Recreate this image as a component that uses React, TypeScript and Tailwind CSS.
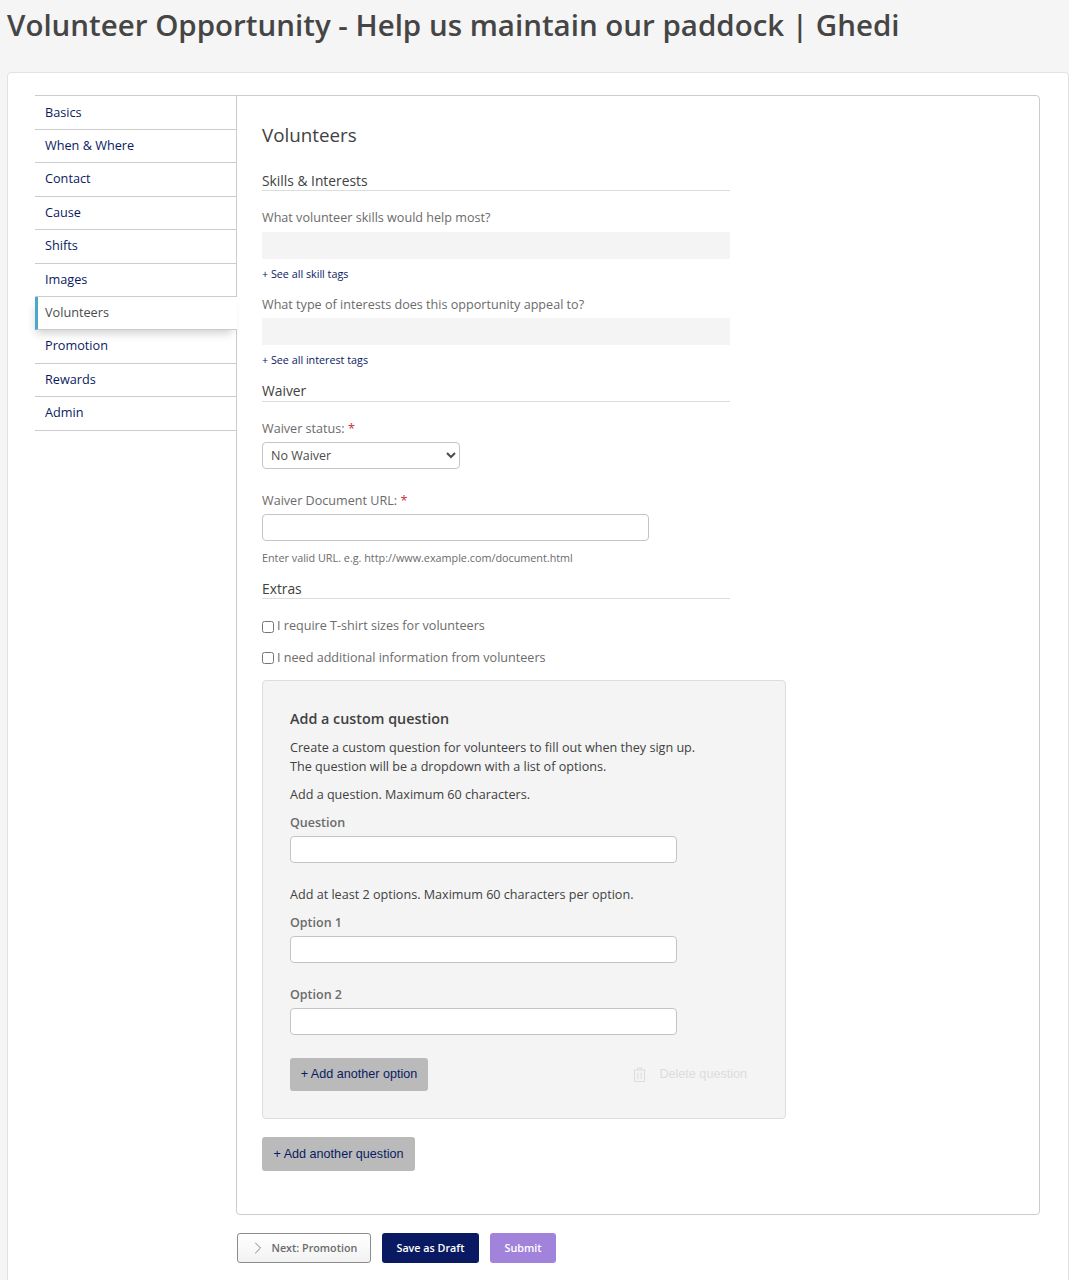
import { ChevronRight } from "lucide-react";

const navItems = ["Basics", "When & Where", "Contact", "Cause", "Shifts", "Images", "Volunteers", "Promotion", "Rewards", "Admin"];

const SectionHeading = ({ children, className }: { children: string; className: string }) => (
  <h3 className={`w-[468px] border-b border-[#dddddd] text-[13.8px] leading-[20px] text-[#414141] ${className}`}>{children}</h3>
);

const TextBox = ({ className }: { className: string }) => (
  <input type="text" className={`block w-[387px] h-[27px] bg-white border border-[#c4c4c4] rounded-[4px] ${className}`} />
);

const Required = () => <span className="text-[#c8303a]"> *</span>;

const App = () => {
  return (
    <div className="h-[1280px] overflow-hidden bg-[#f5f5f5] font-['Open_Sans',sans-serif]">
      <h1 className="pl-[7px] pt-[4px] h-[72px] text-[29.5px] leading-[42px] font-semibold text-[#454545] whitespace-nowrap">
        Volunteer Opportunity - Help us maintain our paddock | Ghedi
      </h1>
      <div className="ml-[7px] h-[1300px] bg-white border border-[#e2e2e2] rounded-tl-[4px] rounded-tr-[4px] pl-[27px] pt-[22px] pr-[28px]">
        <div className="flex items-start">
          <ul className="w-[202px] shrink-0 border-t border-[#cccccc] pt-[0.7px] mr-[-1px]">
            {navItems.map((item) =>
              item === "Volunteers" ? (
                <li key={item} className="relative z-10 h-[33.4px] bg-white border-b border-[#cccccc] border-l-[3px] border-l-[#4ba8c9] pl-[7px] text-[12.7px] leading-[31.2px] text-[#4c4c4c] shadow-[-2px_6px_10px_-3px_rgba(0,0,0,0.2)]">
                  {item}
                </li>
              ) : (
                <li key={item} className="h-[33.4px] border-b border-[#cccccc] pl-[10px] text-[12.7px] leading-[31.2px] text-[#0a1a62]">
                  {item}
                </li>
              )
            )}
          </ul>
          <div className="flex-1">
            <div className="h-[1120px] border border-[#cccccc] rounded-br-[4px] rounded-tr-[4px] rounded-bl-[4px] pl-[25px]">
              <h2 className="pt-[26px] text-[18.8px] leading-[26px] text-[#414141]">Volunteers</h2>
              <SectionHeading className="mt-[23px] h-[20px]">Skills & Interests</SectionHeading>
              <p className="mt-[17px] text-[12.6px] leading-[20px] text-[#6b6b6b]">What volunteer skills would help most?</p>
              <div className="mt-[4px] w-[468px] h-[27px] bg-[#f4f4f4]" />
              <a className="block mt-[7px] text-[10.75px] leading-[16px] text-[#0a1a62]">+ See all skill tags</a>
              <p className="mt-[13px] text-[12.6px] leading-[20px] text-[#6b6b6b]">What type of interests does this opportunity appeal to?</p>
              <div className="mt-[3px] w-[468px] h-[27px] bg-[#f4f4f4]" />
              <a className="block mt-[7px] text-[10.75px] leading-[16px] text-[#0a1a62]">+ See all interest tags</a>
              <SectionHeading className="mt-[13px] h-[21px]">Waiver</SectionHeading>
              <p className="mt-[17px] text-[12.6px] leading-[20px] text-[#6b6b6b]">Waiver status:<Required /></p>
              <select className="block mt-[3px] w-[198px] h-[27px] pl-[4px] bg-white border border-[#c4c4c4] rounded-[4px] text-[12.5px] text-[#4c4c4c]">
                <option>No Waiver</option>
              </select>
              <p className="mt-[22px] text-[12.6px] leading-[20px] text-[#6b6b6b]">Waiver Document URL:<Required /></p>
              <TextBox className="mt-[3px]" />
              <p className="mt-[9px] text-[10.8px] leading-[16px] text-[#6b6b6b]">Enter valid URL. e.g. http://www.example.com/document.html</p>
              <SectionHeading className="mt-[13px] h-[20px]">Extras</SectionHeading>
              <label className="mt-[17px] flex items-center h-[20px] text-[12.6px] text-[#6b6b6b]">
                <input type="checkbox" className="w-[12px] h-[12px] mr-[3px] mt-[1px]" />I require T-shirt sizes for volunteers
              </label>
              <label className="mt-[12px] flex items-center h-[20px] text-[12.6px] text-[#6b6b6b]">
                <input type="checkbox" className="w-[12px] h-[12px] mr-[3px]" />I need additional information from volunteers
              </label>
              <div className="mt-[12px] w-[524px] h-[439px] bg-[#f4f4f4] border border-[#dddddd] rounded-[4px] pl-[27px] pt-[27px] text-[12.6px] text-[#414141]">
                <h4 className="text-[14.35px] leading-[22px] font-semibold text-[#414141]">Add a custom question</h4>
                <p className="mt-[8px] leading-[19px]">Create a custom question for volunteers to fill out when they sign up.<br />The question will be a dropdown with a list of options.</p>
                <p className="mt-[9px] leading-[19px]">Add a question. Maximum 60 characters.</p>
                <p className="mt-[9px] leading-[19px] text-[12.5px] font-semibold text-[#6b6b6b]">Question</p>
                <TextBox className="mt-[4px]" />
                <p className="mt-[22px] leading-[19px]">Add at least 2 options. Maximum 60 characters per option.</p>
                <p className="mt-[9px] leading-[19px] text-[12.5px] font-semibold text-[#6b6b6b]">Option 1</p>
                <TextBox className="mt-[4px]" />
                <p className="mt-[22px] leading-[19px] text-[12.5px] font-semibold text-[#6b6b6b]">Option 2</p>
                <TextBox className="mt-[4px]" />
                <div className="mt-[23px] w-[457px] flex items-center justify-between">
                  <button className="h-[33px] w-[138px] bg-[#bababa] rounded-[3px] font-['Liberation_Sans',sans-serif] text-[12.6px] text-[#0a1a62]">+ Add another option</button>
                  <span className="flex items-center gap-[13px] font-['Liberation_Sans',sans-serif] text-[12.6px] text-[#dcdcdc]">
                    <svg width="13" height="15" viewBox="0 0 13 15" fill="none" stroke="#dcdcdc" strokeWidth="1">
                      <path d="M0.5 3h12M4.5 3V1h4v2M1.5 3v11.5h10V3M4.8 5.5v6.5M8.2 5.5v6.5" />
                    </svg>
                    Delete question
                  </span>
                </div>
              </div>
              <button className="mt-[18px] h-[34px] w-[153px] bg-[#bababa] rounded-[3px] font-['Liberation_Sans',sans-serif] text-[12.6px] text-[#0a1a62]">+ Add another question</button>
            </div>
            <div className="mt-[18px] ml-[1px] flex gap-[11px] text-[10.75px] font-semibold">
              <button className="flex items-center h-[30px] w-[134px] pl-[10px] gap-[3.5px] border border-[#8c8c8c] rounded-[3px] bg-gradient-to-b from-white to-[#f2f2f2] text-[#6b6b6b]">
                <ChevronRight className="w-[20px] h-[20px]" strokeWidth={1} />
                Next: Promotion
              </button>
              <button className="h-[30px] w-[97px] rounded-[3px] bg-[#0a1a62] text-white">Save as Draft</button>
              <button className="h-[30px] w-[66px] rounded-[3px] bg-[#a283dc] text-white">Submit</button>
            </div>
          </div>
        </div>
      </div>
    </div>
  );
};

export default App;
